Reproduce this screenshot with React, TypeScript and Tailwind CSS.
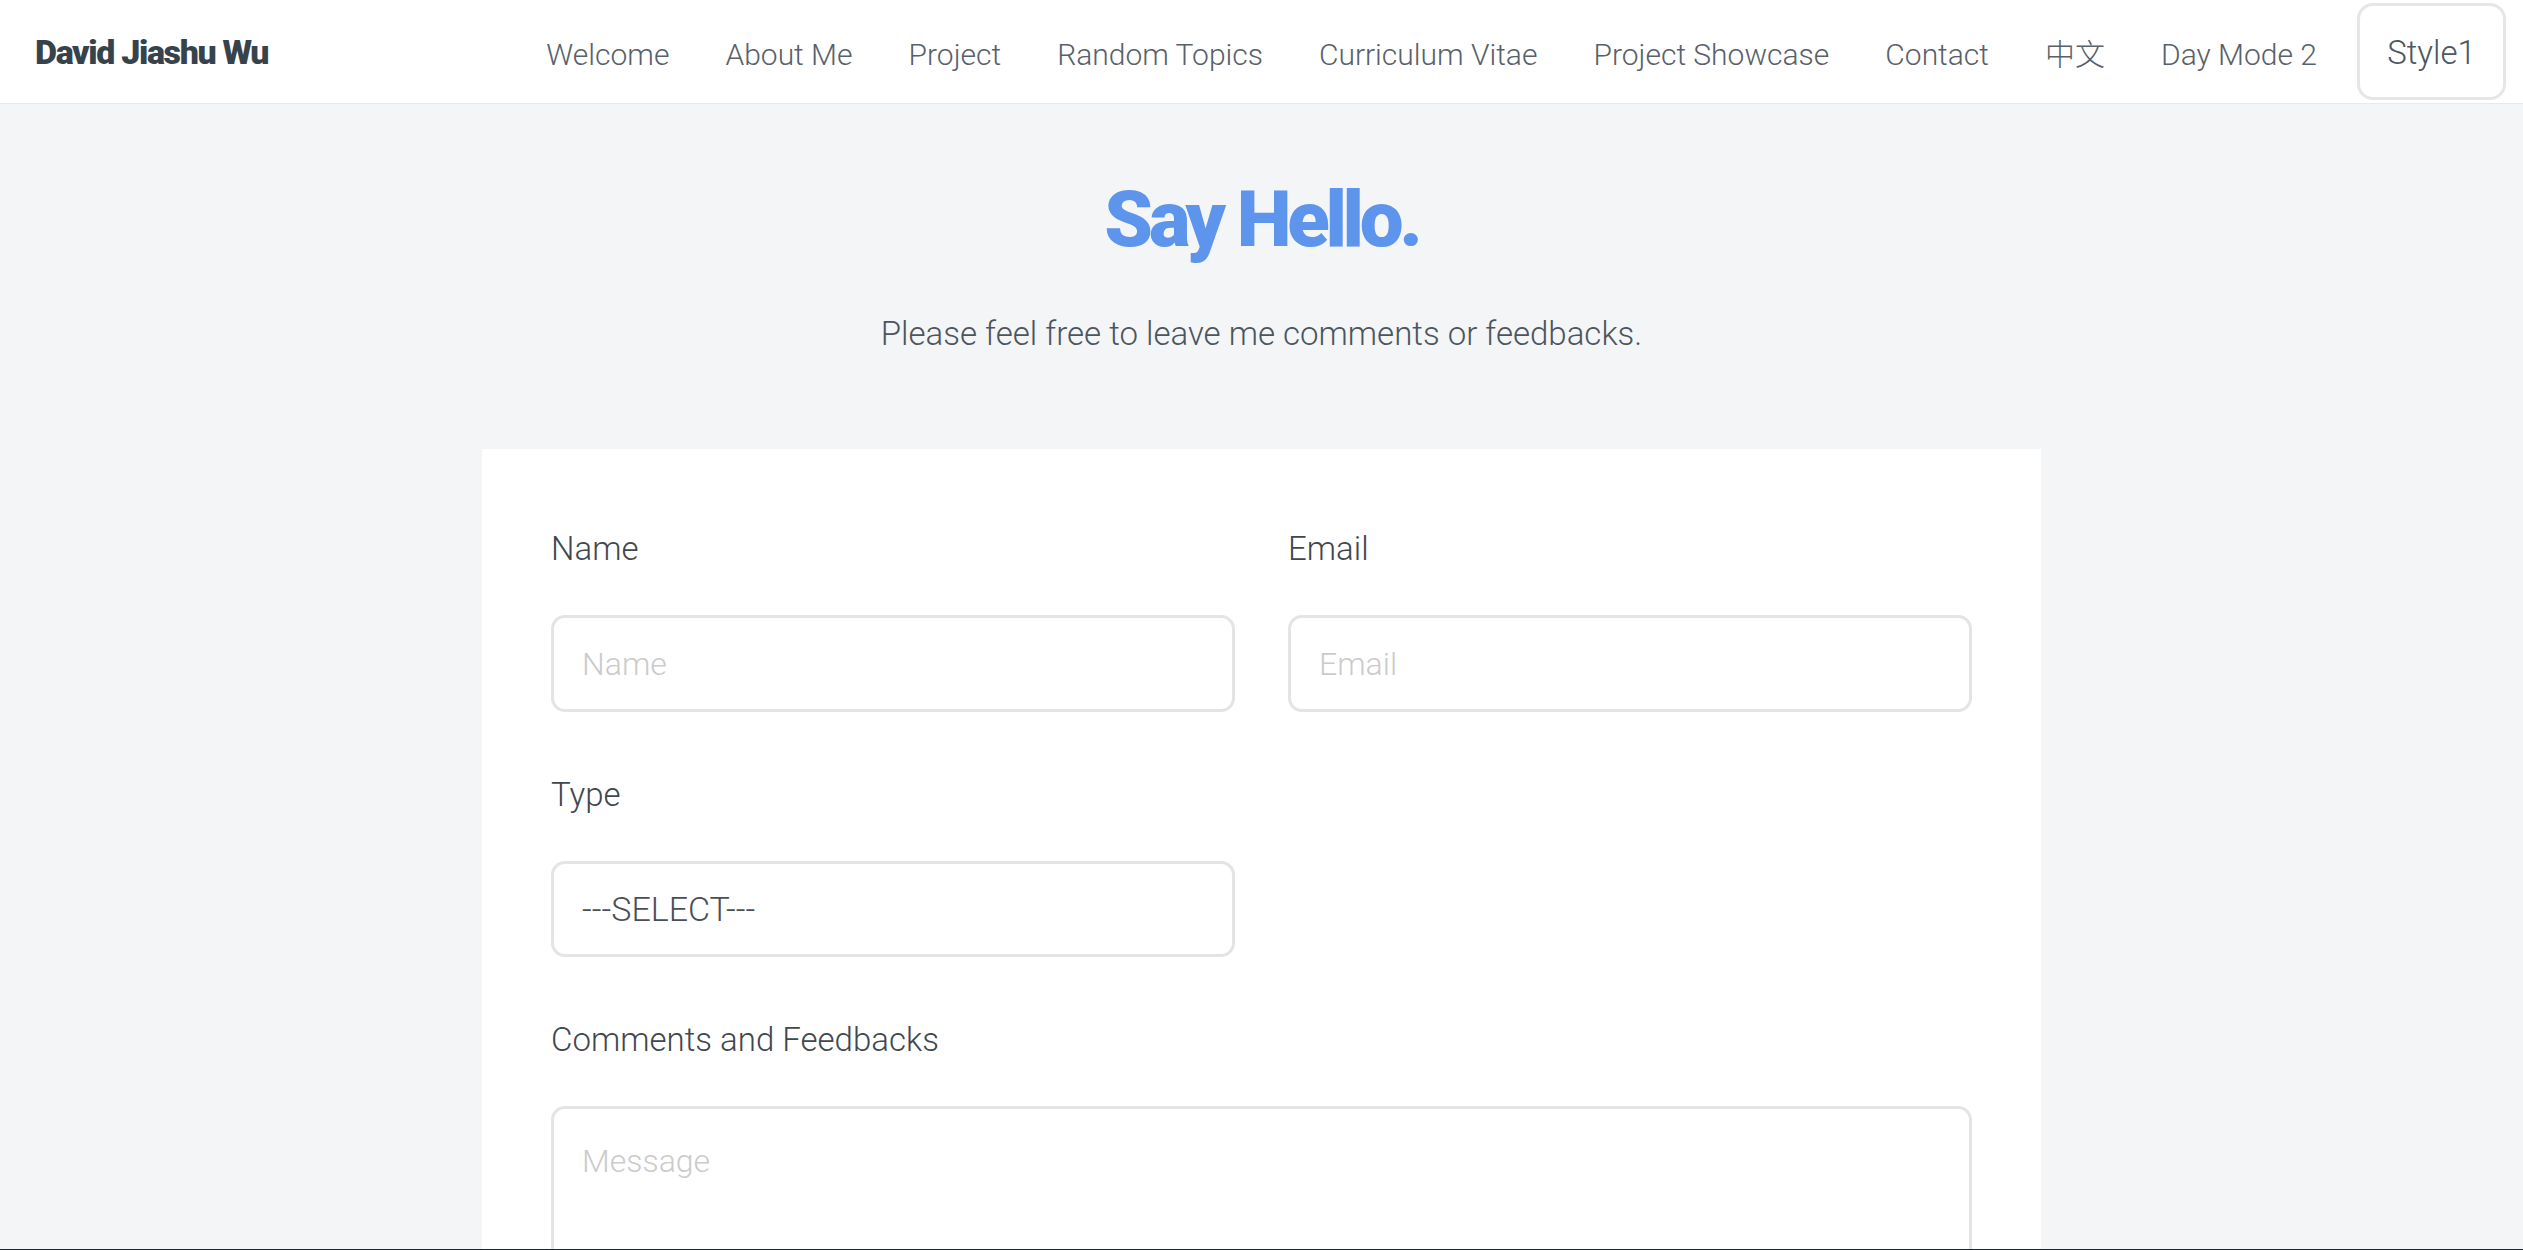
import { useState } from 'react'

const links = ['Welcome', 'About Me', 'Project', 'Random Topics', 'Curriculum Vitae', 'Project Showcase', 'Contact', '中文', 'Day Mode 2']

function Field({ label, children }: { label: string; children: React.ReactNode }) {
  return (
    <div className="flex flex-col">
      <label className="text-[33px] leading-[40px] text-[#3f474f] mb-[46px]">{label}</label>
      {children}
    </div>
  )
}

export default function App() {
  const [type, setType] = useState('')

  return (
    <div
      className="h-screen overflow-hidden flex flex-col bg-[#f4f5f7] border-b border-[#1b2733] font-light"
      style={{ fontFamily: 'Roboto, "Noto Sans CJK SC", sans-serif' }}
    >
      <header className="h-[104px] shrink-0 bg-white border-b border-[#e9eaec] flex items-center pl-[35px] pr-[17px]">
        <a className="text-[34px] font-black tracking-[-0.04em] text-[#36434d] mt-[2px]">David Jiashu Wu</a>
        <nav className="ml-auto flex items-center gap-[56px]">
          {links.map((l) => (
            <a key={l} className="text-[30px] text-[#58616a] whitespace-nowrap mt-[6px]">{l}</a>
          ))}
          <button className="-ml-[16px] w-[149px] h-[97px] pt-[3px] rounded-[16px] border-[3px] border-[#e6e6e6] text-[33px] text-[#4e565e] bg-white">
            Style1
          </button>
        </nav>
      </header>

      <main className="flex flex-col items-center pt-[77px]">
        <h1 className="text-[78px] leading-none font-black tracking-[-0.055em] text-[#5d94ec]">Say Hello.</h1>
        <p className="mt-[55px] text-[33px] leading-[40px] text-[#4c555e]">
          Please feel free to leave me comments or feedbacks.
        </p>

        <form className="mt-[95px] w-[1559px] bg-white px-[69px] pt-[80px] pb-[80px]">
          <div className="grid grid-cols-2 gap-x-[53px]">
            <Field label="Name">
              <input
                placeholder="Name"
                className="h-[97px] rounded-[14px] border-[3px] border-[#e4e4e4] px-[28px] text-[32px] font-light text-[#4a4f55] placeholder:text-[#cbcbcb] outline-none"
              />
            </Field>
            <Field label="Email">
              <input
                placeholder="Email"
                className="h-[97px] rounded-[14px] border-[3px] border-[#e4e4e4] px-[28px] text-[32px] font-light text-[#4a4f55] placeholder:text-[#cbcbcb] outline-none"
              />
            </Field>
          </div>

          <div className="grid grid-cols-2 gap-x-[53px] mt-[63px]">
            <Field label="Type">
              <select
                value={type}
                onChange={(e) => setType(e.target.value)}
                className="h-[96px] appearance-none rounded-[14px] border-[3px] border-[#e4e4e4] bg-white px-[28px] text-[34px] font-light text-[#4a4f55] outline-none"
              >
                <option value="">---SELECT---</option>
                <option value="comment">Comment</option>
                <option value="feedback">Feedback</option>
              </select>
            </Field>
          </div>

          <div className="mt-[63px]">
            <Field label="Comments and Feedbacks">
              <textarea
                placeholder="Message"
                className="h-[320px] resize-none rounded-[14px] border-[3px] border-[#e4e4e4] px-[28px] py-[28px] text-[32px] font-light text-[#4a4f55] placeholder:text-[#cbcbcb] outline-none"
              />
            </Field>
          </div>
        </form>
      </main>
    </div>
  )
}
